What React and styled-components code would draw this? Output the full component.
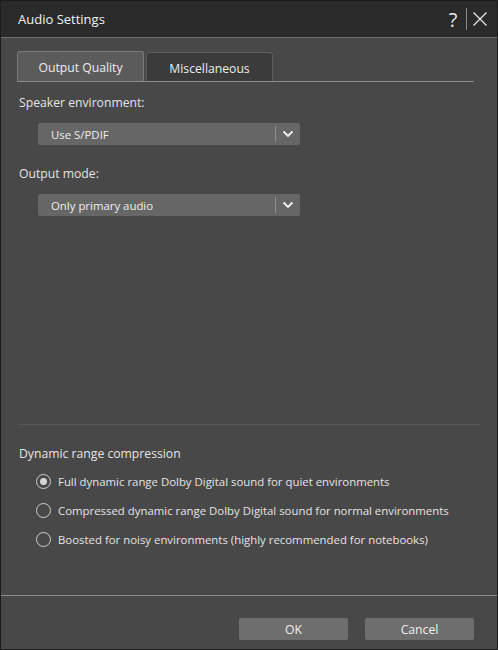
import React, { useState } from "react";
import styled, { createGlobalStyle } from "styled-components";

const GlobalStyle = createGlobalStyle`
  html, body {
    margin: 0;
    padding: 0;
    background: #1c1c1c;
  }
  * { box-sizing: border-box; }
`;

const Window = styled.div`
  width: 498px;
  height: 650px;
  display: flex;
  flex-direction: column;
  background: #484848;
  border: 1px solid #1c1c1c;
  font-family: "Open Sans", "Noto Sans", sans-serif;
  font-size: 11.4px;
  color: #e4e4e4;
`;

const TitleBar = styled.div`
  height: 37px;
  flex: none;
  display: flex;
  align-items: center;
  justify-content: space-between;
  padding: 0 6px 0 17px;
  background: #2a2a2a;
  border-bottom: 1px solid #707070;
`;

const Title = styled.div`
  font-size: 13px;
  color: #f2f2f2;
`;

const TitleButtons = styled.div`
  display: flex;
  align-items: center;
  height: 100%;
`;

const IconButton = styled.div`
  width: 22px;
  height: 22px;
  display: flex;
  align-items: center;
  justify-content: center;
  color: #e8e8e8;
  font-size: 20px;
`;

const Sep = styled.div`
  width: 1px;
  height: 22px;
  background: #8a8a8a;
  margin: 0 2px;
`;

const Body = styled.div`
  flex: 1;
  display: flex;
  flex-direction: column;
  padding: 13px 16px 0 16px;
`;

const TabStrip = styled.div`
  display: flex;
  gap: 2px;
  border-bottom: 1px solid #8c8c8c;
  margin-right: 7px;
`;

const Tab = styled.div`
  width: 127px;
  height: ${p => (p.$active ? "30px" : "29px")};
  display: flex;
  align-items: center;
  justify-content: center;
  font-size: 12.2px;
  color: #ececec;
  background: ${p => (p.$active ? "#5b5b5b" : "#3b3b3b")};
  border: 1px solid ${p => (p.$active ? "#7a7a7a" : "#5e5e5e")};
  border-bottom: none;
  border-radius: 3px 3px 0 0;
  align-self: flex-end;
  padding-top: 2px;
`;

const Label = styled.div`
  font-size: 12.2px;
  padding-left: 2px;
  margin-top: ${p => p.$top || 0}px;
`;

const Select = styled.div`
  width: 262px;
  height: 22px;
  margin: 12px 0 0 21px;
  display: flex;
  align-items: center;
  background: #666666;
  border-radius: 2px;
  color: #eeeeee;
`;

const SelectText = styled.div`
  flex: 1;
  padding-left: 13px;
`;

const SelectDivider = styled.div`
  width: 1px;
  height: 16px;
  background: #8e8e8e;
`;

const Chevron = styled.div`
  width: 24px;
  display: flex;
  align-items: center;
  justify-content: center;
`;

const Spacer = styled.div`
  flex: 1;
`;

const Rule = styled.div`
  height: 1px;
  background: #575757;
  margin: 0 0 0 1px;
`;

const Section = styled.div`
  padding: 20px 0 47px 0;
`;

const RadioList = styled.div`
  display: flex;
  flex-direction: column;
  gap: 12px;
  margin-top: 11px;
  padding-left: 19px;
`;

const RadioRow = styled.label`
  display: flex;
  align-items: center;
  gap: 7px;
  height: 17px;
  cursor: pointer;
`;

const RadioCircle = styled.span`
  width: 15px;
  height: 15px;
  border-radius: 50%;
  border: 1px solid #cfcfcf;
  display: flex;
  align-items: center;
  justify-content: center;
  &::after {
    content: "";
    width: 7px;
    height: 7px;
    border-radius: 50%;
    background: ${p => (p.$checked ? "#d6d6d6" : "transparent")};
  }
`;

const Footer = styled.div`
  height: 54px;
  flex: none;
  display: flex;
  justify-content: flex-end;
  align-items: flex-start;
  gap: 17px;
  padding: 22px 23px 0 0;
  border-top: 1px solid #8a8a8a;
`;

const Button = styled.button`
  width: 109px;
  height: 22px;
  background: #6e6e6e;
  border: none;
  border-radius: 2px;
  color: #f0f0f0;
  font-family: inherit;
  font-size: 12.2px;
  padding: 0;
`;

const ChevronIcon = () => (
  <svg width="12" height="8" viewBox="0 0 12 8">
    <path d="M1.5 1.5 L6 6 L10.5 1.5" fill="none" stroke="#f0f0f0" strokeWidth="1.8" />
  </svg>
);

const CloseIcon = () => (
  <svg width="16" height="16" viewBox="0 0 16 16">
    <path d="M1.5 1.5 L14.5 14.5 M14.5 1.5 L1.5 14.5" stroke="#e8e8e8" strokeWidth="1.3" />
  </svg>
);

const options = [
  "Full dynamic range Dolby Digital sound for quiet environments",
  "Compressed dynamic range Dolby Digital sound for normal environments",
  "Boosted for noisy environments (highly recommended for notebooks)",
];

const Dropdown = ({ value }) => (
  <Select>
    <SelectText>{value}</SelectText>
    <SelectDivider />
    <Chevron><ChevronIcon /></Chevron>
  </Select>
);

export default function App() {
  const [tab, setTab] = useState(0);
  const [mode, setMode] = useState(0);

  return (
    <>
      <GlobalStyle />
      <Window>
        <TitleBar>
          <Title>Audio Settings</Title>
          <TitleButtons>
            <IconButton>?</IconButton>
            <Sep />
            <IconButton><CloseIcon /></IconButton>
          </TitleButtons>
        </TitleBar>
        <Body>
          <TabStrip>
            {["Output Quality", "Miscellaneous"].map((t, i) => (
              <Tab key={t} $active={tab === i} onClick={() => setTab(i)}>{t}</Tab>
            ))}
          </TabStrip>
          <Label $top={12}>Speaker environment:</Label>
          <Dropdown value="Use S/PDIF" />
          <Label $top={20}>Output mode:</Label>
          <Dropdown value="Only primary audio" />
          <Spacer />
          <Rule />
          <Section>
            <Label>Dynamic range compression</Label>
            <RadioList>
              {options.map((o, i) => (
                <RadioRow key={o} onClick={() => setMode(i)}>
                  <RadioCircle $checked={mode === i} />
                  {o}
                </RadioRow>
              ))}
            </RadioList>
          </Section>
        </Body>
        <Footer>
          <Button>OK</Button>
          <Button>Cancel</Button>
        </Footer>
      </Window>
    </>
  );
}
